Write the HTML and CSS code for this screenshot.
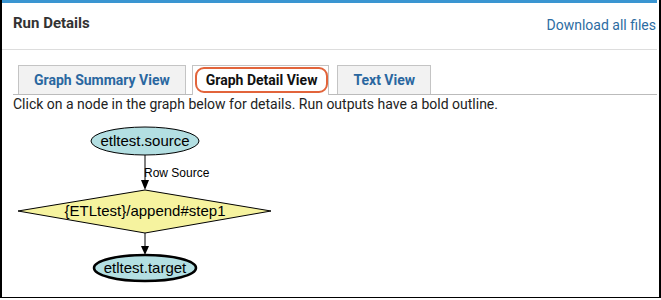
FILE: index.html
```html
<!DOCTYPE html>
<html>
<head>
<meta charset="utf-8">
<link rel="stylesheet" href="styles.css">
</head>
<body>
<div class="frame">
  <div class="panel">
    <div class="panel-head">
      <span class="title">Run Details</span>
      <a class="dl" href="#">Download all files</a>
    </div>
    <div class="panel-body">
      <div class="tabs">
        <div class="tab">Graph Summary View</div>
        <div class="tab active"><span class="ring">Graph Detail View</span></div>
        <div class="tab">Text View</div>
      </div>
      <p class="hint">Click on a node in the graph below for details. Run outputs have a bold outline.</p>
      <svg class="graph" width="280" height="190" viewBox="0 0 280 190">
        <ellipse cx="143" cy="29" rx="54" ry="14" fill="#b3dfe2" stroke="#000" stroke-width="1"/>
        <text x="143" y="34" class="n">etltest.source</text>
        <line x1="143" y1="43" x2="143" y2="69" stroke="#000" stroke-width="1"/>
        <polygon points="139,68 147,68 143,78" fill="#000"/>
        <text x="142" y="65" class="e">Row Source</text>
        <polygon points="143,78 269,99 143,121 16,99" fill="#f6f39f" stroke="#000" stroke-width="1"/>
        <text x="143" y="104" class="n">{ETLtest}/append#step1</text>
        <line x1="143" y1="121" x2="143" y2="135" stroke="#000" stroke-width="1"/>
        <polygon points="139,134 147,134 143,143" fill="#000"/>
        <ellipse cx="143" cy="156" rx="51" ry="13" fill="#b3dfe2" stroke="#000" stroke-width="2.5"/>
        <text x="143" y="161" class="n">etltest.target</text>
      </svg>
    </div>
  </div>
</div>
</body>
</html>
```
FILE: styles.css
```css
html, body {
  margin: 0;
  padding: 0;
  background: #fff;
}
body {
  font-family: Roboto, "Liberation Sans", sans-serif;
  color: #333;
}
.frame {
  width: 657px;
  height: 297px;
  border-left: 2px solid #000;
  border-right: 2px solid #000;
  border-bottom: 1px solid #000;
  overflow: hidden;
  box-shadow: 0 1px 0 #000;
}
.panel {
  border-top: 3px solid #3a95d1;
  margin-right: 2px;
}
.panel-head {
  height: 46px;
  border-bottom: 1px solid #ddd;
  display: flex;
  align-items: flex-start;
  justify-content: space-between;
  padding: 0 0 0 11px;
}
.title {
  font-weight: bold;
  font-size: 15px;
  color: #333;
  margin-top: 11px;
}
.dl {
  font-size: 14px;
  color: #2d6ca2;
  text-decoration: none;
  margin-top: 14px;
  margin-right: 1px;
}
.panel-body {
  padding: 15px 0 0 11px;
}
.tabs {
  display: flex;
  align-items: flex-end;
  border-bottom: 1px solid #bbb;
  height: 29px;
  padding-left: 5px;
}
.tab {
  box-sizing: border-box;
  height: 29px;
  margin-right: 6px;
  padding: 0 15px;
  border: 1px solid #c4c4c4;
  border-bottom: none;
  background: #f2f2f2;
  color: #2a67a0;
  font-weight: bold;
  font-size: 14px;
  display: flex;
  align-items: center;
}
.tab.active {
  background: #fff;
  color: #111;
  padding: 0 0 0 2px;
  height: 30px;
  margin-bottom: -1px;
  margin-right: 8px;
}
.ring {
  border: 2px solid #e2643b;
  border-radius: 9px;
  padding: 3px 9px 3px 9px;
  margin-bottom: 2px;
}
.hint {
  margin: 1px 0 0 0;
  font-size: 14px;
  color: #222;
}
.graph {
  display: block;
  margin: 0 0 0 -11px;
}
.graph .n {
  font-family: "Liberation Sans", Arial, sans-serif;
  font-size: 15px;
  text-anchor: middle;
  fill: #000;
}
.graph .e {
  font-family: "Liberation Sans", Arial, sans-serif;
  font-size: 12px;
  fill: #000;
}
```
